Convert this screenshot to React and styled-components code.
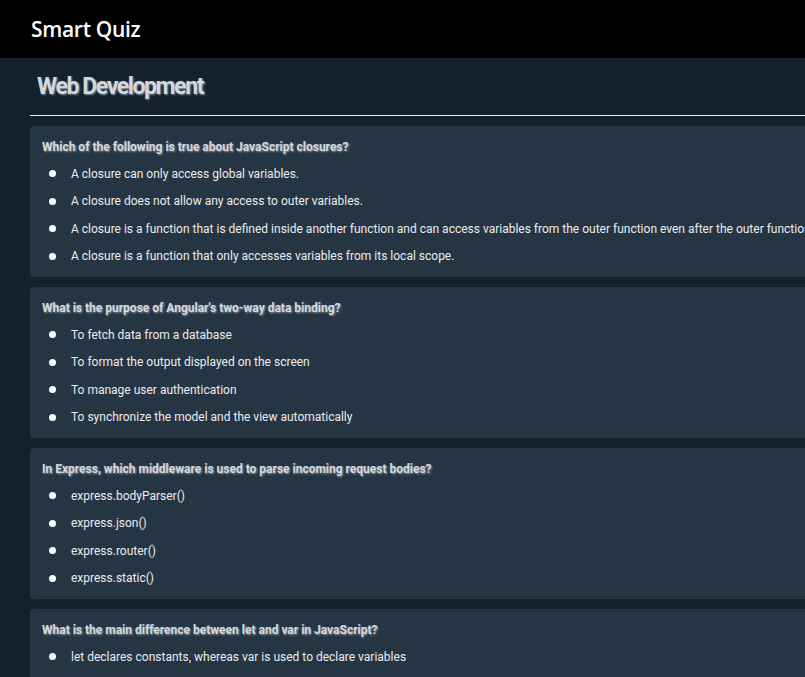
import React from "react";
import styled, { createGlobalStyle } from "styled-components";

const GlobalStyle = createGlobalStyle`
  html, body {
    margin: 0;
    padding: 0;
    overflow: hidden;
    background: #14212d;
  }
  * {
    box-sizing: border-box;
  }
`;

const questions = [
  {
    q: "Which of the following is true about JavaScript closures?",
    options: [
      "A closure can only access global variables.",
      "A closure does not allow any access to outer variables.",
      "A closure is a function that is defined inside another function and can access variables from the outer function even after the outer function has returned.",
      "A closure is a function that only accesses variables from its local scope.",
    ],
  },
  {
    q: "What is the purpose of Angular's two-way data binding?",
    options: [
      "To fetch data from a database",
      "To format the output displayed on the screen",
      "To manage user authentication",
      "To synchronize the model and the view automatically",
    ],
  },
  {
    q: "In Express, which middleware is used to parse incoming request bodies?",
    options: [
      "express.bodyParser()",
      "express.json()",
      "express.router()",
      "express.static()",
    ],
  },
  {
    q: "What is the main difference between let and var in JavaScript?",
    options: [
      "let declares constants, whereas var is used to declare variables",
      "let is block-scoped, whereas var is function-scoped",
      "var is block-scoped, whereas let is function-scoped",
      "There is no difference between let and var",
    ],
  },
];

const Page = styled.div`
  min-height: 100vh;
  background: #14212d;
  font-family: Roboto, "Liberation Sans", sans-serif;
`;

const Header = styled.header`
  height: 58px;
  background: #000;
  display: flex;
  align-items: center;
  padding-left: 31px;
`;

const Brand = styled.h1`
  margin: 0;
  font-family: "Open Sans", "Noto Sans", sans-serif;
  font-size: 21px;
  font-weight: 600;
  letter-spacing: -0.3px;
  color: #fff;
`;

const Main = styled.main`
  width: 1100px;
  padding-left: 30px;
`;

const TitleBar = styled.div`
  height: 58px;
  display: flex;
  align-items: center;
  padding-left: 7px;
  border-bottom: 1px solid #e8e8e8;
`;

const Title = styled.h2`
  margin: 0;
  font-size: 23px;
  font-weight: 700;
  letter-spacing: -1.4px;
  color: #d6d6d6;
  text-shadow: 1px 1px 2px #7a8a99;
`;

const List = styled.div`
  display: flex;
  flex-direction: column;
  gap: 10px;
  padding-top: 10px;
`;

const Card = styled.section`
  background: #253544;
  border-radius: 4px;
  padding: 14px 12px 7px;
`;

const Question = styled.h3`
  margin: 0 0 6px;
  font-size: 12px;
  font-weight: 700;
  color: #d8d8d8;
  text-shadow: 1px 1px 2px #8a96a2;
`;

const Options = styled.ul`
  list-style: none;
  margin: 0;
  padding: 0;
`;

const Option = styled.li`
  display: flex;
  align-items: center;
  height: 27.5px;
  padding-left: 7px;
  font-size: 12px;
  color: #ececec;
  white-space: nowrap;

  &::before {
    content: "";
    width: 7px;
    height: 7px;
    border-radius: 50%;
    background: #fff;
    margin-right: 15px;
    flex-shrink: 0;
  }
`;

export default function App() {
  return (
    <Page>
      <GlobalStyle />
      <Header>
        <Brand>Smart Quiz</Brand>
      </Header>
      <Main>
        <TitleBar>
          <Title>Web Development</Title>
        </TitleBar>
        <List>
          {questions.map((item) => (
            <Card key={item.q}>
              <Question>{item.q}</Question>
              <Options>
                {item.options.map((opt) => (
                  <Option key={opt}>{opt}</Option>
                ))}
              </Options>
            </Card>
          ))}
        </List>
      </Main>
    </Page>
  );
}
